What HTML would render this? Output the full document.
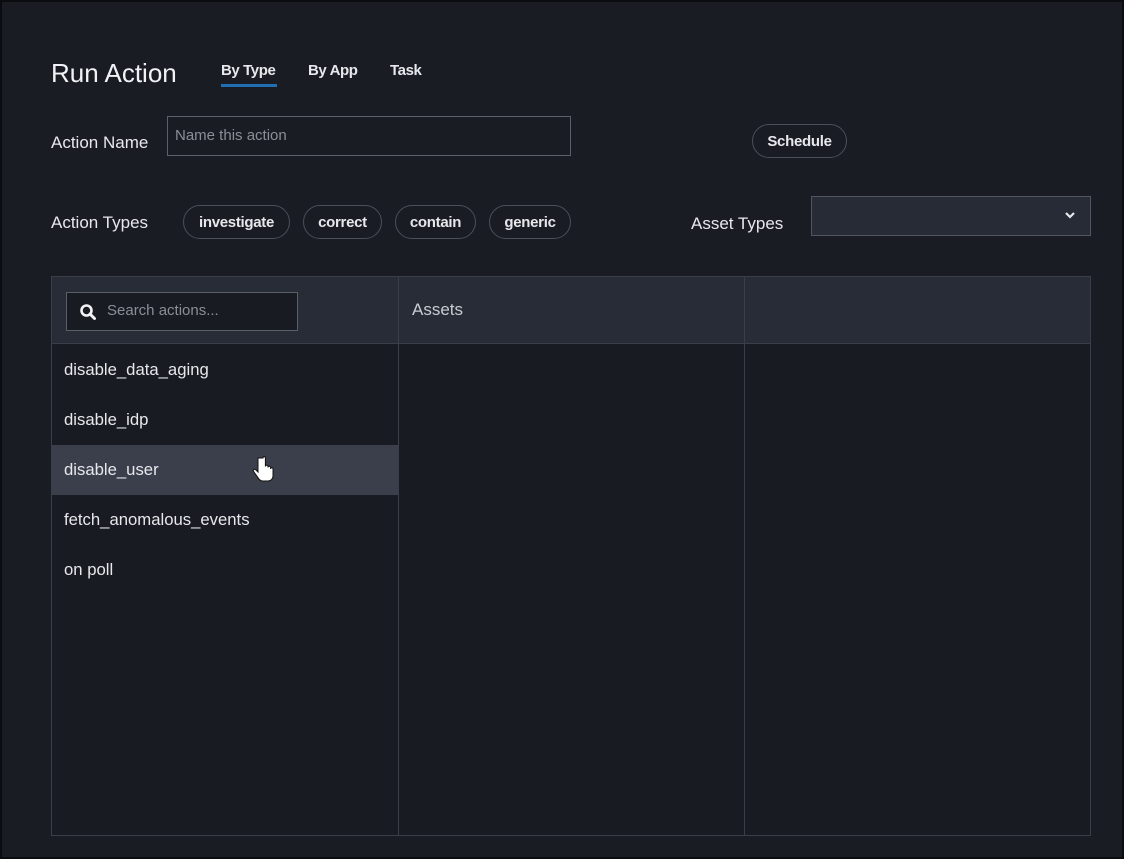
<!DOCTYPE html>
<html><head><meta charset="utf-8"><style>
*{box-sizing:border-box;margin:0;padding:0}
body{width:1124px;height:859px;background:#0b0c0f;font-family:"Liberation Sans",sans-serif;color:#e6e8ec;position:relative;overflow:hidden}
.page{position:absolute;left:2px;top:2px;width:1120px;height:855px;background:#191c23}
.a{position:absolute}
.pill{position:absolute;height:34px;border:1.5px solid #4a4f5a;border-radius:17px;font-size:15px;font-weight:bold;color:#e6e8ec;display:flex;align-items:center;justify-content:center;letter-spacing:-0.3px}
.lbl{font-size:17px;color:#e6e8ec;letter-spacing:0}
.item{position:absolute;left:0;width:346px;height:50px;font-size:16.7px;padding-left:12px;display:flex;align-items:center;color:#e6e8ec}
</style></head><body><div class="page">
<div class="a" style="left:49px;top:56px;font-size:26px;color:#f0f2f5">Run Action</div>
<div class="a" style="left:219px;top:60px;font-size:15px;font-weight:bold;letter-spacing:-0.4px">By Type</div>
<div class="a" style="left:219px;top:82px;width:56px;height:3px;background:#1f6fb2"></div>
<div class="a" style="left:306px;top:60px;font-size:15px;font-weight:bold;letter-spacing:-0.4px">By App</div>
<div class="a" style="left:388px;top:60px;font-size:15px;font-weight:bold;letter-spacing:-0.4px">Task</div>

<div class="a lbl" style="left:49px;top:131px">Action Name</div>
<div class="a" style="left:165px;top:114px;width:404px;height:40px;border:1.5px solid #5a5f69;background:#191c23;font-size:15px;color:#8a8e96;padding:10px 0 0 7px">Name this action</div>
<div class="pill" style="left:750px;top:122px;width:95px">Schedule</div>

<div class="a lbl" style="left:49px;top:211px">Action Types</div>
<div class="pill" style="left:181px;top:203px;width:107px">investigate</div>
<div class="pill" style="left:301px;top:203px;width:79px">correct</div>
<div class="pill" style="left:393px;top:203px;width:81px">contain</div>
<div class="pill" style="left:487px;top:203px;width:82px">generic</div>
<div class="a lbl" style="left:689px;top:212px">Asset Types</div>
<div class="a" style="left:809px;top:194px;width:280px;height:40px;border:1.5px solid #50555f;background:#272b35">
<svg class="a" style="left:252px;top:14px" width="12" height="9" viewBox="0 0 12 9"><path d="M2 2l4 4 4-4" stroke="#e6e8ec" stroke-width="2.2" fill="none"/></svg></div>

<div class="a" style="left:49px;top:274px;width:1040px;height:560px;border:1px solid #3a3e48;background:#181b21">
<div class="a" style="left:0;top:0;width:1038px;height:67px;background:#282c36;border-bottom:1px solid #3a3e48"></div>
<div class="a" style="left:346px;top:0;width:1px;height:558px;background:#3a3e48"></div>
<div class="a" style="left:692px;top:0;width:1px;height:558px;background:#3a3e48"></div>
<div class="a" style="left:14px;top:15px;width:232px;height:39px;border:1.5px solid #5a5f69;background:#181b21">
<svg class="a" style="left:12px;top:10px" width="18" height="18" viewBox="0 0 18 18"><circle cx="7.5" cy="7.5" r="5" stroke="#f0f2f5" stroke-width="2.6" fill="none"/><path d="M11 11l4.5 4.5" stroke="#f0f2f5" stroke-width="3" stroke-linecap="round"/></svg>
<div class="a" style="left:40px;top:9px;font-size:15px;color:#8a8e96">Search actions...</div></div>
<div class="a" style="left:360px;top:23px;font-size:17px;color:#c8cbd1">Assets</div>
<div class="item" style="top:68px">disable_data_aging</div>
<div class="item" style="top:118px">disable_idp</div>
<div class="item" style="top:168px;background:#3b3f4b">disable_user</div>
<div class="item" style="top:218px">fetch_anomalous_events</div>
<div class="item" style="top:268px">on poll</div>
<svg class="a" style="left:200px;top:178px" width="24" height="30" viewBox="0 0 24 30"><path d="M6 3v14l-2-2c-1.5-1.5-3.5 0-2.3 1.7l5 7c1 1.5 2.5 2.3 4.3 2.3h5c3 0 5-2.5 5-5v-7c0-1.6-2.4-1.6-2.4 0v-1.5c0-1.6-2.6-1.6-2.6 0v-1c0-1.6-2.6-1.6-2.6 0V3c0-1.8-2.4-1.8-2.4 0z" fill="#fff" stroke="#111" stroke-width="1"/></svg>
</div>
</div></body></html>
